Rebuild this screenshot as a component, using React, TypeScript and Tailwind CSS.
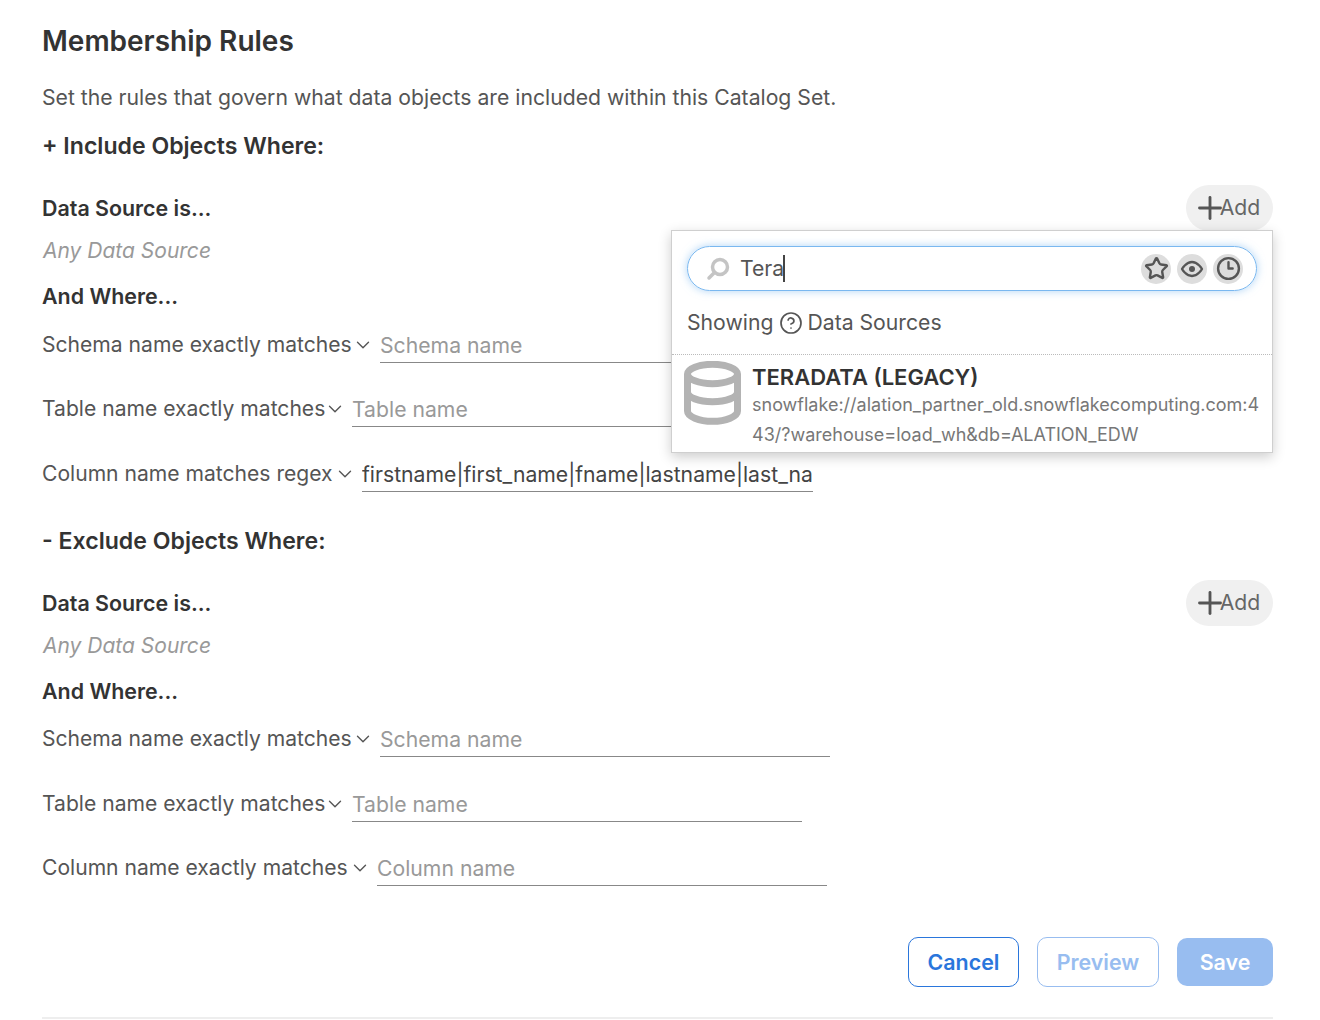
import React from "react";
import { Star, Clock3, ChevronDown, Plus, CircleHelp } from "lucide-react";

function AddButton() {
  return (
    <button className="flex h-[46px] w-[87px] items-center justify-center rounded-full bg-[#f0f0f0] text-[21.2px] text-[#666]">
      <Plus size={36} strokeWidth={1.9} className="mr-[-8px] ml-[-7px] text-[#555]" />
      <span>Add</span>
    </button>
  );
}

function MatchRow({ label, labelWidth, placeholder, value, inputWidth, className }: { label: string; labelWidth: string; placeholder: string; value?: string; inputWidth: string; className: string }) {
  return (
    <div className={`flex items-center ${className}`}>
      <span className={`${labelWidth} text-[21.1px] whitespace-nowrap text-[#555]`}>{label}</span>
      <ChevronDown size={22} strokeWidth={1.5} className="mr-[6px] ml-[1px] text-[#555]" />
      <input
        readOnly
        value={value}
        placeholder={placeholder}
        className={`${inputWidth} h-[36px] border-b border-[#888] bg-transparent pt-[1px] text-[21.2px] text-[#444] outline-none placeholder:text-[#999]`}
      />
    </div>
  );
}

function Conditions({ andClass, schemaClass, tableClass, column }: { andClass: string; schemaClass: string; tableClass: string; column: React.ReactNode }) {
  return (
    <>
      <div className="flex h-[46px] items-center justify-between">
        <span className="text-[21.4px] font-semibold text-[#333]">Data Source is...</span>
        <AddButton />
      </div>
      <div className="mt-[4px] pl-[1px] text-[21px] italic text-[#999]">Any Data Source</div>
      <div className={`${andClass} text-[21.4px] font-semibold text-[#333]`}>And Where...</div>
      <MatchRow className={schemaClass} label="Schema name exactly matches" labelWidth="w-[309px]" placeholder="Schema name" inputWidth="w-[450px]" />
      <MatchRow className={tableClass} label="Table name exactly matches" labelWidth="w-[281px]" placeholder="Table name" inputWidth="w-[450px]" />
      {column}
    </>
  );
}

export default function App() {
  return (
    <div className="relative h-[1020px] w-[1320px] overflow-hidden bg-white pt-[22px] pr-[47px] pl-[42px] font-['Inter',sans-serif]">
      <h1 className="text-[28px] leading-[38px] font-semibold text-[#333]">Membership Rules</h1>
      <p className="mt-[23px] text-[21.2px] leading-[28px] text-[#555]">Set the rules that govern what data objects are included within this Catalog Set.</p>
      <h2 className="mt-[20px] mb-[24px] text-[23.1px] leading-[30px] font-semibold text-[#333]">+ Include Objects Where:</h2>
      <Conditions
        andClass="mt-[13px]"
        schemaClass="mt-[15px]"
        tableClass="mt-[28px]"
        column={
          <MatchRow
            className="mt-[29px]"
            label="Column name matches regex"
            labelWidth="w-[291px]"
            placeholder=""
            value="firstname|first_name|fname|lastname|last_name"
            inputWidth="w-[451px]"
          />
        }
      />
      <h2 className="mt-[34px] mb-[24px] text-[23.1px] leading-[30px] font-semibold text-[#333]">- Exclude Objects Where:</h2>
      <Conditions
        andClass="mt-[14px]"
        schemaClass="mt-[14px]"
        tableClass="mt-[29px]"
        column={<MatchRow className="mt-[28px]" label="Column name exactly matches" labelWidth="w-[306px]" placeholder="Column name" inputWidth="w-[450px]" />}
      />

      <div className="mt-[51px] flex items-center justify-end gap-[18px]">
        <button className="h-[50px] w-[111px] rounded-[10px] border border-[#2a76dc] text-[21.4px] font-semibold text-[#2a76dc]">Cancel</button>
        <button className="h-[50px] w-[122px] rounded-[10px] border border-[#98bdf0] text-[21.4px] font-semibold text-[#98bdf0]">Preview</button>
        <button className="h-[48px] w-[96px] rounded-[10px] bg-[#98bdf0] text-[21.4px] font-semibold text-white">Save</button>
      </div>
      <div className="mt-[30px] h-[2px] bg-[#eeeeee]" />

      {/* data source picker */}
      <div className="absolute top-[230px] left-[671px] h-[223px] w-[602px] border border-[#cfcfcf] bg-white shadow-[0_4px_12px_rgba(0,0,0,0.2)]">
        <div className="mx-[15px] mt-[15px] flex h-[45px] items-center rounded-full border border-[#7ab8f0] pr-[13px] pl-[17px] shadow-[0_0_8px_rgba(122,184,240,0.6)]">
          <svg width="26" height="26" viewBox="0 0 26 26" fill="none" stroke="#c4c4c4" strokeWidth="3.5">
            <circle cx="15" cy="11" r="7.5" />
            <path d="M9.5 16.5 4 22" strokeLinecap="round" />
          </svg>
          <span className="ml-[9px] text-[21.2px] text-[#555]">Tera</span>
          <span className="ml-[-1px] h-[27px] w-[2px] bg-[#444]" />
          <div className="ml-auto flex gap-[6px]">
            <span className="flex h-[30px] w-[30px] items-center justify-center rounded-full bg-[#dddddd]">
              <Star size={25} strokeWidth={2.3} className="text-[#555]" />
            </span>
            <span className="flex h-[30px] w-[30px] items-center justify-center rounded-full bg-[#dddddd]">
              <svg width="24" height="24" viewBox="0 0 24 24" fill="none" stroke="#555" strokeWidth="2.3">
                <path d="M2 12s4-7 10-7 10 7 10 7-4 7-10 7-10-7-10-7z" strokeLinejoin="round" />
                <circle cx="12" cy="12" r="3" fill="#555" stroke="none" />
              </svg>
            </span>
            <span className="flex h-[30px] w-[30px] items-center justify-center rounded-full bg-[#dddddd]">
              <Clock3 size={25} strokeWidth={2.3} className="text-[#555]" />
            </span>
          </div>
        </div>
        <div className="mt-[16px] flex items-center px-[15px] text-[21.2px] text-[#555]">
          <span>Showing</span>
          <CircleHelp size={24} strokeWidth={1.7} className="mr-[4px] ml-[6px]" />
          <span>Data Sources</span>
        </div>
        <div className="mt-[15px] flex h-[98px] border-t border-dotted border-[#bbbbbb] pl-[12px]">
          <svg width="57" height="65" viewBox="0 0 57 65" fill="none" stroke="#b3b3b3" strokeWidth="7" className="mt-[6px] shrink-0">
            <ellipse cx="28.5" cy="13" rx="25" ry="9.7" />
            <path d="M3.5 13v37c0 5.4 11.2 10.3 25 10.3s25-4.9 25-10.3V13" />
            <path d="M3.5 31c0 5.4 11.2 9.7 25 9.7s25-4.3 25-9.7" />
          </svg>
          <div className="ml-[11px] min-w-0 flex-1 pr-[8px]">
            <div className="mt-[10px] text-[22px] leading-[25px] font-semibold text-[#333]">TERADATA (LEGACY)</div>
            <div className="text-[18px] leading-[30px] break-all text-[#777]">snowflake://alation_partner_old.snowflakecomputing.com:443/?warehouse=load_wh&amp;db=ALATION_EDW</div>
          </div>
        </div>
      </div>
    </div>
  );
}
